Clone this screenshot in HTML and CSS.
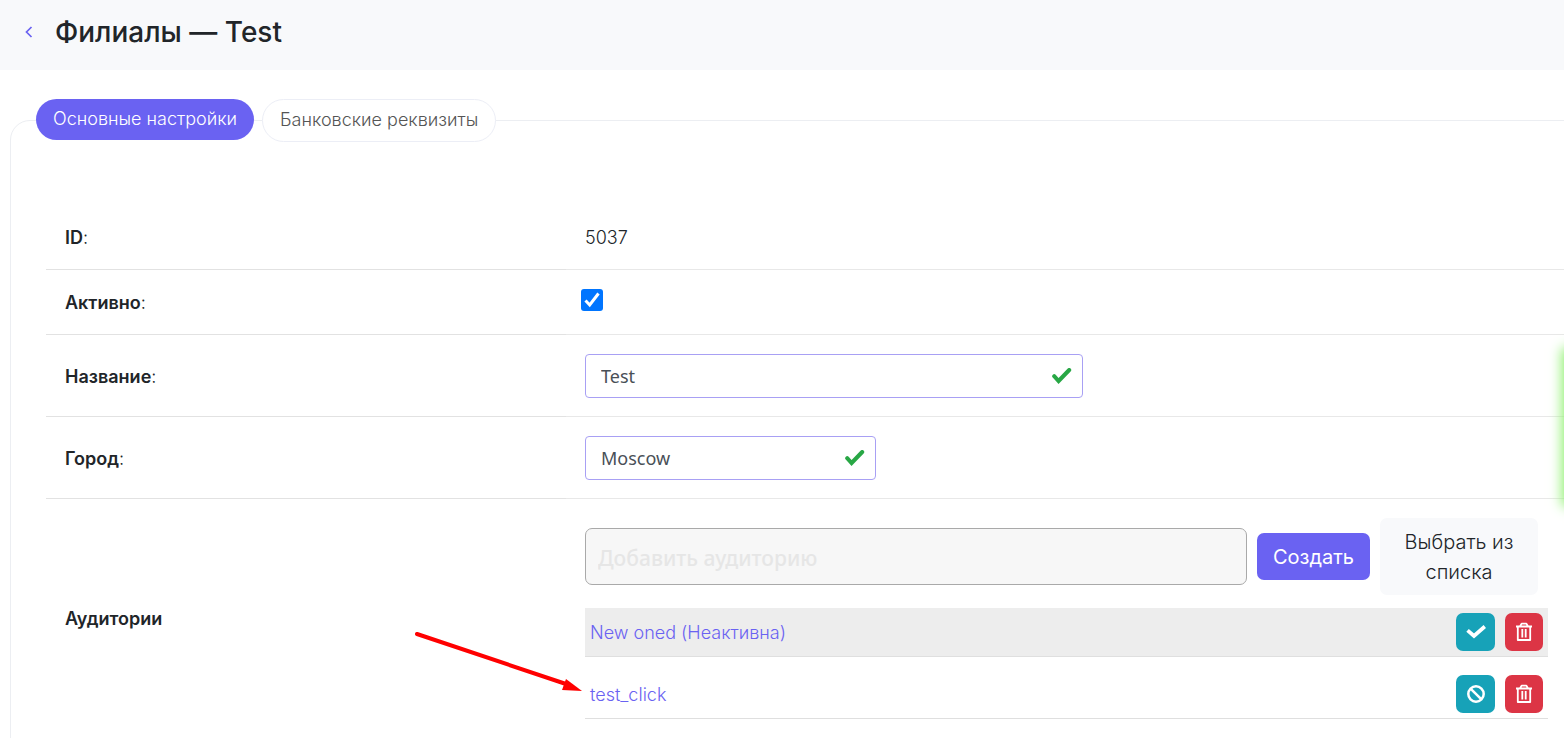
FILE: index.html
```html
<!DOCTYPE html>
<html lang="ru">
<head>
    <meta charset="UTF-8">
    <meta name="viewport" content="width=device-width, initial-scale=1.0">
    <title>Филиалы — Test</title>
    <link rel="stylesheet" href="styles.css">
</head>
<body>
    <!-- icons -->
    <svg class="sprite" aria-hidden="true">
        <symbol id="icon-valid" viewBox="0 0 20 16">
            <path d="M2.2 8.2 L6.6 13 L17.2 2" fill="none" stroke="currentColor" stroke-width="4" stroke-linecap="round"/>
        </symbol>
        <symbol id="icon-check" viewBox="0 0 20 16">
            <path d="M3 7.600 L8 12 L17.400 3.800" fill="none" stroke="currentColor" stroke-width="3.800" stroke-linecap="square"/>
        </symbol>
        <symbol id="icon-ban" viewBox="0 0 18 18">
            <circle cx="9" cy="9" r="7.7" fill="none" stroke="currentColor" stroke-width="2.5"/>
            <path d="M3.8 3.8 L14.2 14.2" stroke="currentColor" stroke-width="2.5"/>
        </symbol>
        <symbol id="icon-trash" viewBox="0 0 18 20">
            <path d="M1 4.5 H17 M5.2 4 L6.6 1.6 H11.4 L12.8 4 M2.8 4.5 V18 H15.200 V4.500 M7.300 7 V15.500 M10.700 7 V15.500" fill="none" stroke="currentColor" stroke-width="1.800" stroke-linejoin="round"/>
        </symbol>
    </svg>

    <header class="page-header">
        <a class="back" href="#" aria-label="Назад">
            <svg width="8" height="12" viewBox="0 0 8 12"><path d="M6.500 1 L1.500 6 L6.500 11" fill="none" stroke="currentColor" stroke-width="1.700"/></svg>
        </a>
        <h1>Филиалы — Test</h1>
    </header>

    <main>
        <nav class="tabs">
            <a class="tab active" href="#main">Основные настройки</a>
            <a class="tab" href="#bank">Банковские реквизиты</a>
        </nav>

        <div class="panel" id="main">
            <table class="form-table">
                <tr>
                    <th>ID<span>:</span></th>
                    <td>5037</td>
                </tr>
                <tr>
                    <th><label for="active">Активно<span>:</span></label></th>
                    <td><input type="checkbox" id="active" class="checkbox" checked></td>
                </tr>
                <tr>
                    <th><label for="name">Название<span>:</span></label></th>
                    <td>
                        <div class="field field-name">
                            <input type="text" id="name" value="Test">
                            <svg class="valid"><use href="#icon-valid"/></svg>
                        </div>
                    </td>
                </tr>
                <tr>
                    <th><label for="city">Город<span>:</span></label></th>
                    <td>
                        <div class="field field-city">
                            <input type="text" id="city" value="Moscow">
                            <svg class="valid"><use href="#icon-valid"/></svg>
                        </div>
                    </td>
                </tr>
                <tr>
                    <th><label for="room">Аудитории</label></th>
                    <td>
                        <div class="rooms">
                            <div class="add-room">
                                <input type="text" id="room" placeholder="Добавить аудиторию">
                                <button type="button" class="btn btn-primary">Создать</button>
                                <button type="button" class="btn btn-light">Выбрать из списка</button>
                            </div>
                            <div class="room inactive">
                                <a href="#">New oned (Неактивна)</a>
                                <button type="button" class="btn-icon info" aria-label="Активировать"><svg class="check"><use href="#icon-check"/></svg></button>
                                <button type="button" class="btn-icon danger" aria-label="Удалить"><svg class="trash"><use href="#icon-trash"/></svg></button>
                            </div>
                            <div class="room">
                                <a href="#">test_click</a>
                                <button type="button" class="btn-icon info" aria-label="Деактивировать"><svg class="ban"><use href="#icon-ban"/></svg></button>
                                <button type="button" class="btn-icon danger" aria-label="Удалить"><svg class="trash"><use href="#icon-trash"/></svg></button>
                                <svg class="arrow" viewBox="0 0 168 62">
                                    <path d="M3 3 L152 53" stroke="#f00" stroke-width="4" stroke-linecap="round"/>
                                    <path d="M152 48 L168 60 L148 59 Z" fill="#f00"/>
                                </svg>
                            </div>
                        </div>
                    </td>
                </tr>
            </table>
        </div>
    </main>

    <div class="side-glow"></div>
</body>
</html>
```

FILE: styles.css
```css
* {
    box-sizing: border-box;
}
body {
    margin: 0;
    font-family: Inter, "Noto Sans", sans-serif;
    font-size: 18px;
    font-weight: 300;
    line-height: 27px;
    color: #212529;
    background: #fff;
    overflow: hidden;
}
a {
    color: #6a62f2;
    text-decoration: none;
}
button {
    font-family: inherit;
    border: none;
    cursor: pointer;
}
.sprite {
    display: none;
}
.page-header {
    display: flex;
    align-items: center;
    gap: 22px;
    height: 70px;
    padding: 0 25px 7px;
    background: #f8f9fb;
}
.back {
    display: flex;
}
h1 {
    margin: 0;
    font-size: 28px;
    font-weight: 500;
    line-height: 34px;
}

/* tabs sit on the top border of the panel */
.tabs {
    position: relative;
    z-index: 1;
    display: flex;
    align-items: flex-start;
    gap: 8px;
    padding: 29px 36px 0;
}
.tab {
    padding: 6px 17px 8px;
    border: 1px solid #eceef6;
    border-radius: 22px;
    background: #fff;
    color: #555;
}
.tab.active {
    border: none;
    background: #6a62f2;
    color: #fff;
}
.panel {
    margin: -22px -39px 0 10px;
    padding: 84px 35px 20px;
    border: 1px solid #eceef2;
    border-radius: 20px;
}

.form-table {
    width: 100%;
    border-collapse: separate;
    border-spacing: 0;
    table-layout: fixed;
}
.form-table th,
.form-table td {
    padding: 19px 19px 18px;
    border-bottom: 1px solid #e8e8e8;
    text-align: left;
    vertical-align: middle;
}
.form-table th {
    width: 520px;
    border-color: #e2e2e2;
    font-weight: 600;
}
.form-table th span {
    font-weight: 300;
}
.form-table tr:last-child th,
.form-table tr:last-child td {
    border-bottom: none;
}
.checkbox {
    display: block;
    width: 22px;
    height: 22px;
    margin: 0 0 5px -4px;
    appearance: none;
    border-radius: 3px;
    background: #0075ff url("data:image/svg+xml,%3Csvg xmlns='http://www.w3.org/2000/svg' viewBox='0 0 22 22'%3E%3Cpath d='M4.500 11.500 L8.700 16 L17.500 4.500' fill='none' stroke='white' stroke-width='3'/%3E%3C/svg%3E");
}
.field {
    position: relative;
}
.field-name {
    width: 498px;
}
.field-city {
    width: 291px;
}
.field input {
    display: block;
    width: 100%;
    height: 44px;
    padding: 0 48px 0 15px;
    border: 1px solid #a8a0f4;
    border-radius: 4px;
    font-family: "Noto Sans", sans-serif;
    font-size: 18px;
    color: #495057;
}
.valid {
    position: absolute;
    top: 14px;
    right: 11px;
    width: 20px;
    height: 16px;
    color: #28a745;
}

.rooms {
    display: flex;
    flex-direction: column;
    gap: 13px;
}
.add-room {
    display: flex;
    align-items: center;
    gap: 10px;
    padding-right: 10px;
}
.add-room input {
    flex: 1;
    min-width: 0;
    height: 57px;
    padding: 2px 12px 0;
    border: 1px solid #a9a9a9;
    border-radius: 7px;
    background: #f7f7f7;
    font-family: "Noto Sans", sans-serif;
    font-size: 21px;
    font-weight: 500;
}
.add-room input::placeholder {
    color: #e6e6e6;
}
.btn {
    padding: 9px 16px 8px;
    border-radius: 7px;
    font-size: 20px;
    line-height: 30px;
}
.btn-primary {
    background: #6a62f2;
    color: #fff;
    font-weight: 400;
}
.btn-light {
    width: 158px;
    background: #f8f9fb;
    color: #212529;
    font-weight: 300;
}
.room {
    position: relative;
    display: flex;
    align-items: center;
    gap: 10px;
    padding: 5px;
    border-bottom: 1px solid #dfdfdf;
}
.room.inactive {
    background: #ededed;
}
.room a {
    flex: 1;
}
.btn-icon {
    display: flex;
    align-items: center;
    justify-content: center;
    width: 38px;
    height: 38px;
    padding: 0;
    border-radius: 7px;
    color: #fff;
}
.btn-icon.info {
    width: 39px;
    background: #17a2b8;
}
.btn-icon.danger {
    background: #dc3545;
}
.check {
    width: 20px;
    height: 16px;
}
.ban {
    width: 18px;
    height: 18px;
}
.trash {
    width: 18px;
    height: 20px;
}

/* pointer drawn over the table */
.arrow {
    position: absolute;
    top: -39px;
    left: -171px;
    width: 168px;
    height: 62px;
}
.side-glow {
    position: fixed;
    top: 350px;
    left: 100%;
    width: 60px;
    height: 154px;
    box-shadow: 0 0 12px 2px #8cf06c;
}
```
